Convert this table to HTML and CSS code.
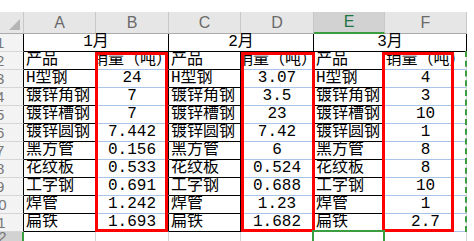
FILE: index.html
```html
<!DOCTYPE html>
<html lang="zh">
<head>
<meta charset="utf-8">
<title>Sheet</title>
<link rel="stylesheet" href="styles.css">
</head>
<body>
<div class="sheet">
  <div class="topbar"></div>

  <div class="corner"><svg class="tri" width="11" height="11" viewBox="0 0 11 11"><polygon points="11,0 11,11 0,11" fill="#b5b5b5"/></svg></div>
  <div class="colhdr">A</div>
  <div class="colhdr">B</div>
  <div class="colhdr">C</div>
  <div class="colhdr">D</div>
  <div class="colhdr sel">E</div>
  <div class="colhdr">F</div>
  <div class="hdr-end"></div>

  <div class="rowhdr"><span>1</span></div>
  <div class="month m-first">1月</div>
  <div class="month">2月</div>
  <div class="month">3月</div>
  <div class="pad"></div>

  <div class="rowhdr"><span>2</span></div>
  <div class="p">产品</div><div class="n">销量（吨）</div>
  <div class="p">产品</div><div class="n">销量（吨）</div>
  <div class="p">产品</div><div class="n nf">销量（吨）</div>
  <div class="pad"></div>

  <div class="rowhdr"><span>3</span></div>
  <div class="p">H型钢</div><div class="n">24</div>
  <div class="p">H型钢</div><div class="n">3.07</div>
  <div class="p">H型钢</div><div class="n nf">4</div>
  <div class="pad"></div>

  <div class="rowhdr"><span>4</span></div>
  <div class="p">镀锌角钢</div><div class="n">7</div>
  <div class="p">镀锌角钢</div><div class="n">3.5</div>
  <div class="p">镀锌角钢</div><div class="n nf">3</div>
  <div class="pad"></div>

  <div class="rowhdr"><span>5</span></div>
  <div class="p">镀锌槽钢</div><div class="n">7</div>
  <div class="p">镀锌槽钢</div><div class="n">23</div>
  <div class="p">镀锌槽钢</div><div class="n nf">10</div>
  <div class="pad"></div>

  <div class="rowhdr"><span>6</span></div>
  <div class="p">镀锌圆钢</div><div class="n">7.442</div>
  <div class="p">镀锌圆钢</div><div class="n">7.42</div>
  <div class="p">镀锌圆钢</div><div class="n nf">1</div>
  <div class="pad"></div>

  <div class="rowhdr"><span>7</span></div>
  <div class="p">黑方管</div><div class="n">0.156</div>
  <div class="p">黑方管</div><div class="n">6</div>
  <div class="p">黑方管</div><div class="n nf">8</div>
  <div class="pad"></div>

  <div class="rowhdr"><span>8</span></div>
  <div class="p">花纹板</div><div class="n">0.533</div>
  <div class="p">花纹板</div><div class="n">0.524</div>
  <div class="p">花纹板</div><div class="n nf">8</div>
  <div class="pad"></div>

  <div class="rowhdr"><span>9</span></div>
  <div class="p">工字钢</div><div class="n">0.691</div>
  <div class="p">工字钢</div><div class="n">0.688</div>
  <div class="p">工字钢</div><div class="n nf">10</div>
  <div class="pad"></div>

  <div class="rowhdr two"><span>10</span></div>
  <div class="p">焊管</div><div class="n">1.242</div>
  <div class="p">焊管</div><div class="n">1.23</div>
  <div class="p">焊管</div><div class="n nf">1</div>
  <div class="pad"></div>

  <div class="rowhdr two"><span>11</span></div>
  <div class="p">扁铁</div><div class="n">1.693</div>
  <div class="p">扁铁</div><div class="n">1.682</div>
  <div class="p">扁铁</div><div class="n nf">2.7</div>
  <div class="pad"></div>

  <div class="rowhdr two active"><span>12</span></div>
  <div class="e"></div><div class="e"></div><div class="e"></div>
  <div class="e"></div><div class="e"></div><div class="e"></div>
  <div class="pad"></div>

  <div class="box box-b"></div>
  <div class="box box-d"></div>
  <div class="box box-f"></div>
  <div class="active-cell"></div>
  <div class="marquee"></div>
</div>
</body>
</html>
```

FILE: styles.css
```css
* {
  box-sizing: border-box;
  margin: 0;
  padding: 0;
}

body {
  margin: 0;
  background: #ffffff;
  width: 474px;
  height: 241px;
  overflow: hidden;
  font-family: "Liberation Mono", "Noto Sans CJK SC", monospace;
  font-size: 16px;
  color: #000;
}

.sheet {
  position: relative;
  display: grid;
  grid-template-columns: 24px 72px 73px 72px 73px 71px 82px 7px;
  grid-template-rows: 12px 22px repeat(11, 18px) 9px;
  width: 474px;
  height: 241px;
  overflow: hidden;
}

.topbar {
  grid-column: 1 / -1;
  background: #ffffff;
}

.corner {
  position: relative;
  background: #e6e6e6;
  border-right: 1px solid #c8c8c8;
  border-bottom: 1px solid #ababab;
}

.tri {
  position: absolute;
  right: 3px;
  bottom: 3px;
}

.colhdr {
  display: flex;
  align-items: center;
  justify-content: center;
  background: #e6e6e6;
  border-right: 1px solid #c8c8c8;
  border-bottom: 1px solid #ababab;
  font-family: "Liberation Sans", sans-serif;
  font-size: 16px;
  color: #6a6a6a;
}

.colhdr.sel {
  background: #d2d2d2;
  color: #217346;
  border-bottom: 2px solid #3c9d40;
}

.hdr-end {
  background: #ffffff;
}

.rowhdr {
  display: flex;
  align-items: center;
  overflow: hidden;
  background: #f3f3f3;
  border-right: 1px solid #000;
  border-bottom: 1px solid #d6d6d6;
  font-family: "Liberation Sans", sans-serif;
  font-size: 15px;
  color: #777;
}

.rowhdr span {
  margin-left: -4px;
}

.rowhdr.two span {
  margin-left: -10px;
}

.rowhdr.active {
  background: #d2d2d2;
  border-right: 2px solid #3c9d40;
  border-bottom: none;
}

.month {
  grid-column: span 2;
  display: flex;
  align-items: center;
  justify-content: center;
  border-right: 1px solid #000;
  border-bottom: 1px solid #000;
  line-height: 17px;
}

.p {
  display: flex;
  align-items: center;
  padding-left: 2px;
  border-right: 1px solid #000;
  border-bottom: 1px solid #000;
  white-space: nowrap;
  overflow: hidden;
  line-height: 17px;
}

.n {
  display: flex;
  align-items: center;
  justify-content: center;
  border-right: 1px solid #000;
  border-bottom: 1px solid #a9c4e8;
  white-space: nowrap;
  overflow: hidden;
  line-height: 17px;
}

.n.nf {
  border-right: 1px solid #d4d4d4;
}

.pad {
  background: #ffffff;
}

.e {
  border-right: 1px solid #d4d4d4;
}

.box {
  position: absolute;
  top: 52px;
  height: 180px;
  border: 3px solid #ff0000;
}

.box-b {
  left: 95px;
  width: 73px;
}

.box-d {
  left: 241px;
  width: 74px;
}

.box-f {
  left: 382px;
  width: 72px;
}

.active-cell {
  position: absolute;
  left: 312px;
  top: 230px;
  width: 73px;
  height: 16px;
  border: 2px solid #3c9d40;
}

.marquee {
  position: absolute;
  left: 465px;
  top: 51px;
  width: 2px;
  height: 181px;
  border-left: 2px dashed #3c9d40;
}
```
